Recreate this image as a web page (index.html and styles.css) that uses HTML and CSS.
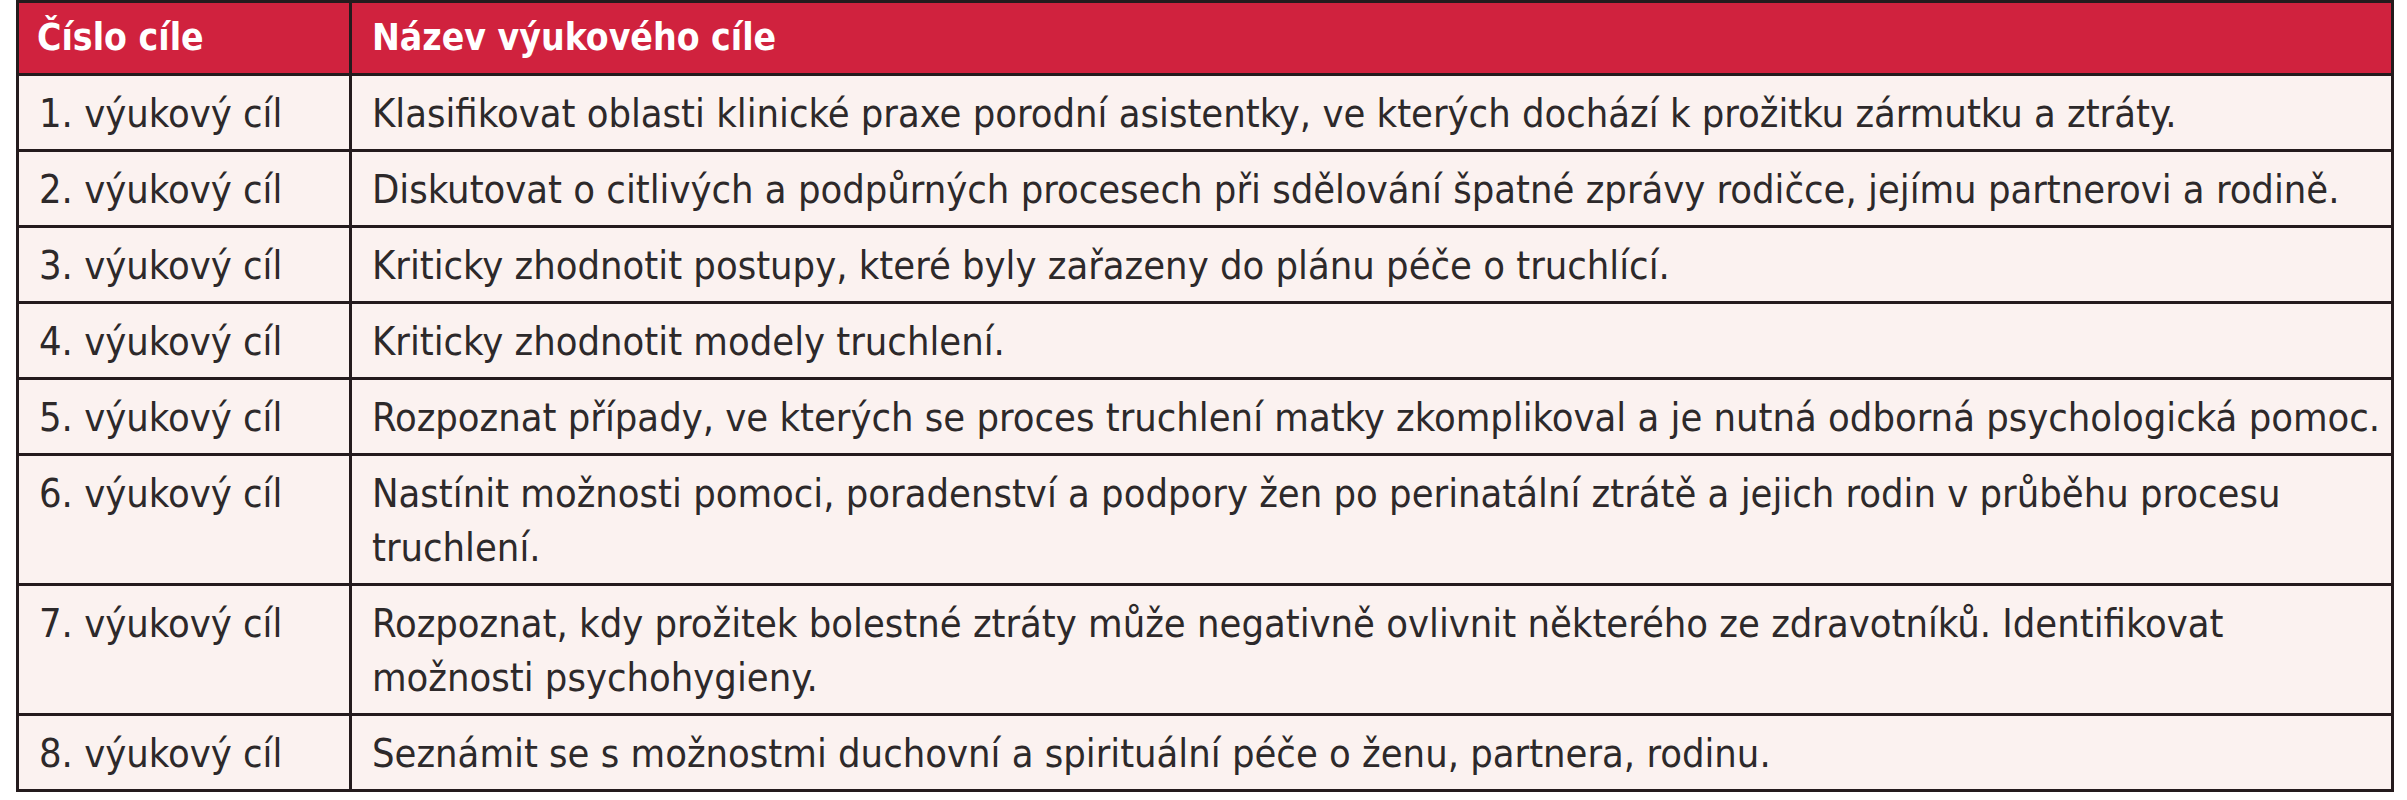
FILE: index.html
```html
<!DOCTYPE html>
<html lang="cs">
<head>
<meta charset="utf-8">
<title>Výukové cíle</title>
<link rel="stylesheet" href="styles.css">
</head>
<body>
<table class="goals">
  <thead>
    <tr>
      <th class="col-num">Číslo cíle</th>
      <th class="col-name">Název výukového cíle</th>
    </tr>
  </thead>
  <tbody>
    <tr><td>1. výukový cíl</td><td>Klasifikovat oblasti klinické praxe porodní asistentky, ve kterých dochází k prožitku zármutku a ztráty.</td></tr>
    <tr><td>2. výukový cíl</td><td>Diskutovat o citlivých a podpůrných procesech při sdělování špatné zprávy rodičce, jejímu partnerovi a rodině.</td></tr>
    <tr><td>3. výukový cíl</td><td>Kriticky zhodnotit postupy, které byly zařazeny do plánu péče o truchlící.</td></tr>
    <tr><td>4. výukový cíl</td><td>Kriticky zhodnotit modely truchlení.</td></tr>
    <tr><td>5. výukový cíl</td><td>Rozpoznat případy, ve kterých se proces truchlení matky zkomplikoval a je nutná odborná psychologická pomoc.</td></tr>
    <tr><td>6. výukový cíl</td><td>Nastínit možnosti pomoci, poradenství a podpory žen po perinatální ztrátě a jejich rodin v průběhu procesu<br>truchlení.</td></tr>
    <tr><td>7. výukový cíl</td><td>Rozpoznat, kdy prožitek bolestné ztráty může negativně ovlivnit některého ze zdravotníků. Identifikovat<br>možnosti psychohygieny.</td></tr>
    <tr><td>8. výukový cíl</td><td>Seznámit se s možnostmi duchovní a spirituální péče o ženu, partnera, rodinu.</td></tr>
  </tbody>
</table>
</body>
</html>
```

FILE: styles.css
```css
html, body {
  margin: 0;
  padding: 0;
  background: #ffffff;
}

body {
  padding: 0 0 0 16px;
  font-family: "DejaVu Sans Condensed", "Liberation Sans", Arial, sans-serif;
}

.goals {
  border-collapse: collapse;
  width: 2378px;
  table-layout: fixed;
  color: #2d292a;
  font-size: 39.5px;
  line-height: 54px;
}

.goals th,
.goals td {
  border: 3px solid #241b1d;
  text-align: left;
  vertical-align: top;
  white-space: nowrap;
}

.goals th {
  background: #d0223e;
  color: #ffffff;
  font-weight: bold;
  font-size: 37px;
  padding: 8px 18px 8px 18px;
}

.goals td {
  background: #fbf2f0;
  padding: 10px 18px 9px 20px;
}

.goals .col-num {
  width: 294px;
}

.goals th.col-name {
  padding-left: 20px;
}
```
